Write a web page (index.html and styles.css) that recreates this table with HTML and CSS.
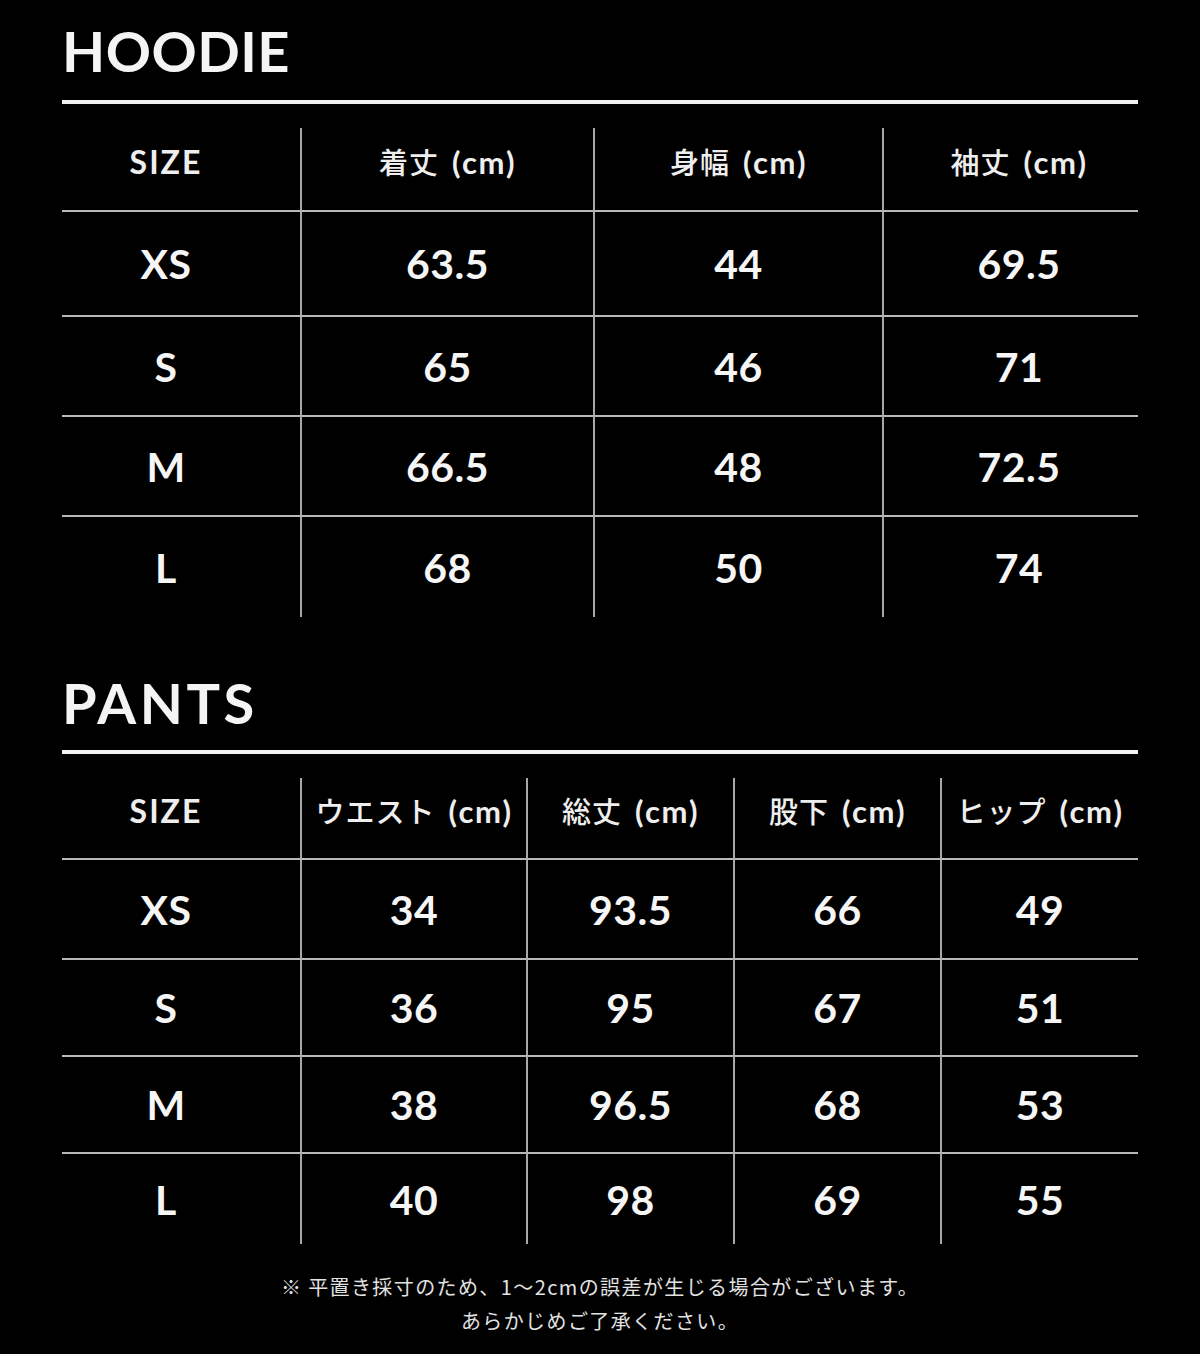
FILE: index.html
```html
<!DOCTYPE html>
<html lang="ja">
<head>
<meta charset="utf-8">
<title>Size Chart</title>
<link rel="stylesheet" href="styles.css">
</head>
<body>
<main class="page">
  <section class="section section-hoodie">
    <h2 class="title title-hoodie">HOODIE</h2>
    <div class="rule"></div>
    <div class="chart chart-hoodie">
      <div class="cell head c-size">SIZE</div>
      <div class="cell head"><span><span class="ja">着丈</span> (cm)</span></div>
      <div class="cell head"><span><span class="ja">身幅</span> (cm)</span></div>
      <div class="cell head c-last"><span><span class="ja">袖丈</span> (cm)</span></div>

      <div class="cell row1 c-size">XS</div>
      <div class="cell row1">63.5</div>
      <div class="cell row1">44</div>
      <div class="cell row1 c-last">69.5</div>

      <div class="cell row2 c-size">S</div>
      <div class="cell row2">65</div>
      <div class="cell row2">46</div>
      <div class="cell row2 c-last">71</div>

      <div class="cell row3 c-size">M</div>
      <div class="cell row3">66.5</div>
      <div class="cell row3">48</div>
      <div class="cell row3 c-last">72.5</div>

      <div class="cell row4 c-size">L</div>
      <div class="cell row4">68</div>
      <div class="cell row4">50</div>
      <div class="cell row4 c-last">74</div>
    </div>
  </section>

  <section class="section section-pants">
    <h2 class="title title-pants">PANTS</h2>
    <div class="rule"></div>
    <div class="chart chart-pants">
      <div class="cell head c-size">SIZE</div>
      <div class="cell head"><span><span class="ja">ウエスト</span> (cm)</span></div>
      <div class="cell head"><span><span class="ja">総丈</span> (cm)</span></div>
      <div class="cell head"><span><span class="ja">股下</span> (cm)</span></div>
      <div class="cell head"><span><span class="ja">ヒップ</span> (cm)</span></div>

      <div class="cell row1 c-size">XS</div>
      <div class="cell row1">34</div>
      <div class="cell row1">93.5</div>
      <div class="cell row1">66</div>
      <div class="cell row1">49</div>

      <div class="cell row2 c-size">S</div>
      <div class="cell row2">36</div>
      <div class="cell row2">95</div>
      <div class="cell row2">67</div>
      <div class="cell row2">51</div>

      <div class="cell row3 c-size">M</div>
      <div class="cell row3">38</div>
      <div class="cell row3">96.5</div>
      <div class="cell row3">68</div>
      <div class="cell row3">53</div>

      <div class="cell row4 c-size">L</div>
      <div class="cell row4">40</div>
      <div class="cell row4">98</div>
      <div class="cell row4">69</div>
      <div class="cell row4">55</div>
    </div>
  </section>

  <p class="note">※ 平置き採寸のため、1～2cmの誤差が生じる場合がございます。<br>あらかじめご了承ください。</p>
</main>
</body>
</html>
```

FILE: styles.css
```css
html, body {
  margin: 0;
  padding: 0;
  background: #000;
}

body {
  color: #fff;
  font-family: "Lato", "Noto Sans CJK JP", sans-serif;
}

.page {
  width: 1076px;
  margin: 0 0 0 62px;
  padding-top: 23px;
}

.title {
  margin: 0 0 0 0;
  font-size: 56px;
  line-height: 56px;
  font-weight: 700;
  color: #f4f4f4;
}

.title-hoodie { letter-spacing: 0.5px; }
.title-pants { letter-spacing: 3.5px; }

.section-hoodie .title { margin-bottom: 21px; }
.section-pants { margin-top: 58px; }
.section-pants .title { margin-bottom: 19px; }

.rule {
  height: 4px;
  background: #f2f2f2;
  margin-bottom: 24px;
}

.chart {
  display: grid;
}

.chart-hoodie {
  grid-template-columns: 238px 293px 289px 256px;
  grid-template-rows: 82px 105px 100px 100px 102px;
}

.chart-pants {
  grid-template-columns: 238px 226px 207px 207px 198px;
  grid-template-rows: 80px 100px 97px 97px 92px;
}

.cell {
  display: flex;
  align-items: center;
  justify-content: center;
  border-left: 2px solid #a8a8a8;
  font-size: 41px;
  font-weight: 700;
  letter-spacing: 0.5px;
  color: #f6f6f6;
  box-sizing: border-box;
}

.cell.c-size {
  border-left: none;
  padding-right: 30px;
}

.chart-hoodie .cell.c-last {
  padding-left: 16px;
}

.cell.row1, .cell.row2, .cell.row3, .cell.row4 {
  border-top: 2px solid #b8b8b8;
}

.cell.head {
  font-size: 31px;
  font-weight: 700;
  letter-spacing: 1.5px;
  color: #eeeeee;
  white-space: nowrap;
  padding-bottom: 16px;
}

.cell.head .ja {
  font-family: "Noto Sans CJK JP", sans-serif;
  font-weight: 500;
  font-size: 29px;
  letter-spacing: 1px;
  margin-right: 4px;
}

.cell.head.c-size {
  font-size: 32px;
  letter-spacing: 2px;
}

.note {
  margin: 26px 0 0 0;
  text-align: center;
  font-family: "Noto Sans CJK JP", sans-serif;
  font-size: 20px;
  line-height: 34px;
  letter-spacing: 1.4px;
  color: #e2e2e2;
}
```
